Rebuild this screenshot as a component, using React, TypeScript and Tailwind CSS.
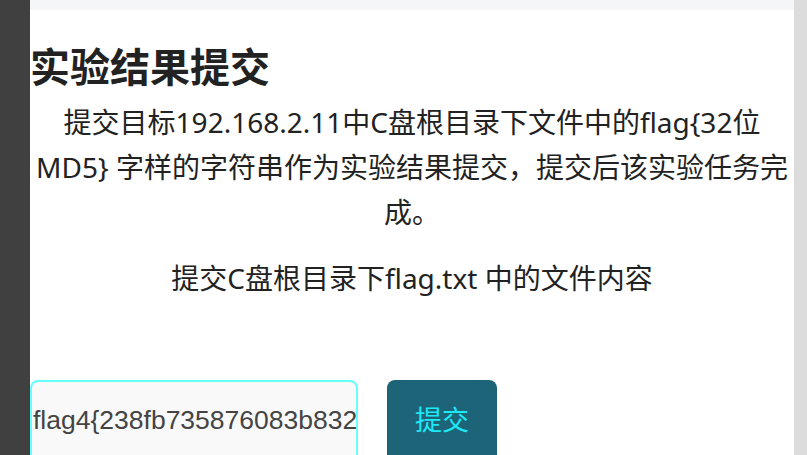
const DESC = "提交目标192.168.2.11中C盘根目录下文件中的flag{32位 MD5} 字样的字符串作为实验结果提交，提交后该实验任务完成。";
const FLAG = "flag4{238fb735876083b832";

export default function App() {
  return (
    <div
      className="flex h-[455px] w-[807px] overflow-hidden bg-white text-[#222]"
      style={{ fontFamily: '"Noto Sans", "Noto Sans CJK SC", sans-serif' }}
    >
      {/* left rail */}
      <div className="w-[30px] shrink-0 bg-[#404040]" />

      <main className="flex min-w-0 flex-1 flex-col">
        <div className="h-[10px] shrink-0 bg-[#f5f6f8]" />

        <h2 className="mt-[33px] text-[40px] font-bold leading-[48px] text-[#222]">实验结果提交</h2>

        <p className="mt-[9px] px-[2px] text-center text-[28px] leading-[45px]">{DESC}</p>

        <p className="mt-[21px] text-center text-[28px] leading-[44px]">提交C盘根目录下flag.txt 中的文件内容</p>

        {/* submit row */}
        <div className="mt-[80px] flex shrink-0 items-start gap-[29px]">
          <div className="flex h-[90px] w-[328px] items-start overflow-hidden rounded-[8px] border-2 border-[#66ffff] bg-[#f9f9f9] pt-[20px]">
            <span
              className="whitespace-nowrap pl-px text-[26.5px] leading-[36px] text-[#444]"
              style={{ fontFamily: '"Liberation Sans", Arial, sans-serif' }}
            >
              {FLAG}
            </span>
          </div>
          <button className="h-[90px] w-[110px] rounded-[8px] bg-[#1d6479] pb-[10px] text-[27px] text-[#1de9f6]">
            提交
          </button>
        </div>
      </main>

      {/* scrollbar */}
      <div className="w-[13px] shrink-0 bg-[#dcdcdc]" />
    </div>
  );
}
